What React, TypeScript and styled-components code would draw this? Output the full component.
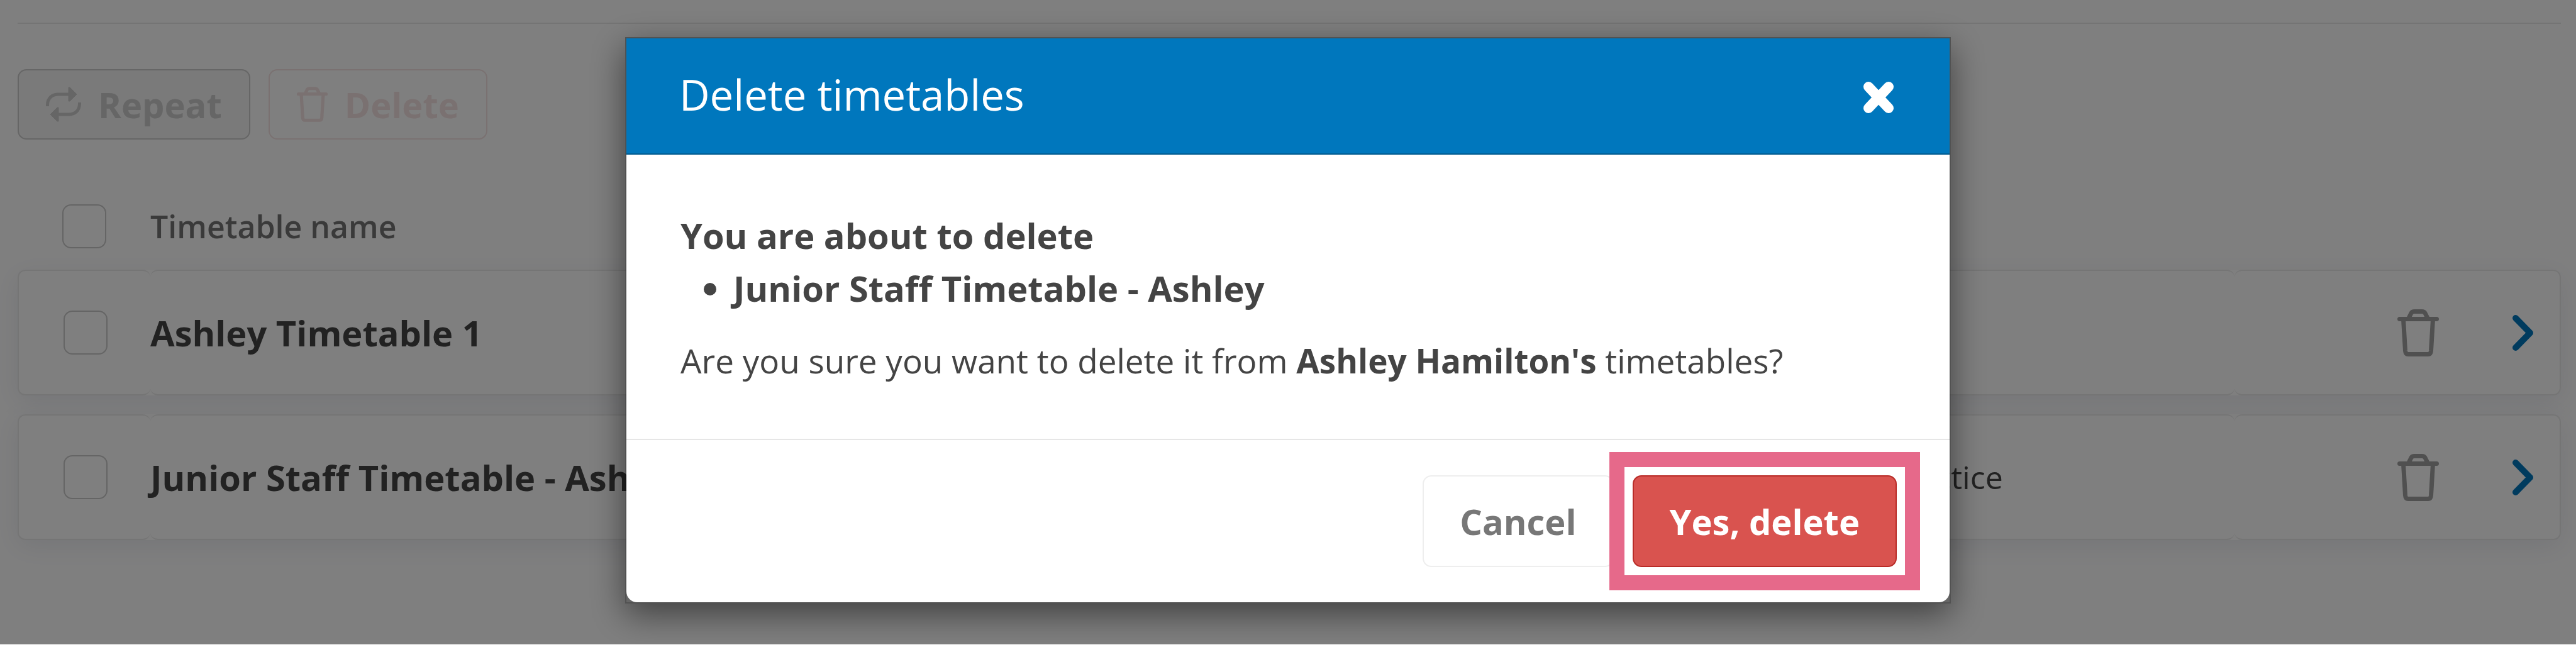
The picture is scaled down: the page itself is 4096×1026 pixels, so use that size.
import React from "react";
import styled, { createGlobalStyle, css } from "styled-components";

const GlobalStyle = createGlobalStyle`
  *, *::before, *::after { box-sizing: border-box; }
  html, body { margin: 0; padding: 0; }
  body {
    min-height: 100vh;
    background: #fff;
    color: #444;
    font-family: "Open Sans", "Noto Sans", sans-serif;
    font-size: 56px;
    line-height: 84px;
    overflow: hidden;
  }
  button { font: inherit; cursor: pointer; margin: 0; }
`;

const Page = styled.main`
  padding: 36px 24px 0 28px;
`;

const Divider = styled.hr`
  height: 2px;
  margin: 0;
  border: 0;
  background: #e8e8e8;
`;

const Toolbar = styled.div`
  display: flex;
  gap: 29px;
  margin-top: 72px;
`;

const ToolButton = styled.button<{ $danger?: boolean }>`
  display: flex;
  align-items: center;
  gap: 27px;
  height: 112px;
  padding: 0 43px;
  border: 2px solid #ccc;
  border-radius: 14px;
  background: #f4f4f4;
  color: #ccc;
  font-weight: 700;
  ${(p) =>
    p.$danger &&
    css`
      border-color: #f4e2e2;
      background: transparent;
      color: #f4e2e2;
    `}
`;

const Table = styled.table`
  width: 100%;
  margin-top: 69px;
  table-layout: fixed;
  border-collapse: separate;
  border-spacing: 0 30px;
`;

const CheckCol = styled.col`
  width: 211px;
`;
const SiteCol = styled.col`
  width: 575px;
`;
const ActionCol = styled.col`
  width: 519px;
`;

const HeadCell = styled.th`
  height: 78px;
  padding: 0;
  color: #747474;
  font-size: 50px;
  font-weight: 600;
  line-height: 78px;
  text-align: left;
  vertical-align: middle;
`;

const HeadCheckCell = styled(HeadCell)`
  padding-left: 71px;
`;

const Row = styled.tr`
  border-radius: 14px;
  box-shadow: 0 10px 40px rgba(70, 85, 130, 0.11);
`;

const Cell = styled.td<{ $strong?: boolean; $inset?: boolean }>`
  height: 200px;
  padding: 0 0 0 ${(p) => (p.$inset ? 22 : 0)}px;
  border: 0 solid #ebebeb;
  border-width: 2px 0;
  border-radius: 12px;
  background: #fff;
  font-size: ${(p) => (p.$strong ? 56 : 50)}px;
  font-weight: ${(p) => (p.$strong ? 700 : 400)};
  white-space: nowrap;
  vertical-align: middle;
  &:first-child { border-left-width: 2px; padding-left: 71px; }
  &:last-child { border-right-width: 2px; }
`;

const Checkbox = styled.input`
  display: block;
  width: 70px;
  height: 70px;
  margin: 0;
  appearance: none;
  border: 2px solid #cacaca;
  border-radius: 14px;
  background: #fff;
`;

const RowActions = styled.div`
  display: flex;
  align-items: center;
  justify-content: flex-end;
  gap: 117px;
  padding-right: 42px;
`;

const IconButton = styled.button<{ $color: string }>`
  display: flex;
  padding: 0;
  border: 0;
  background: none;
  color: ${(p) => p.$color};
`;

const CloseButton = styled(IconButton)`
  padding-top: 8px;
`;

const Backdrop = styled.div`
  position: fixed;
  inset: 0 0 1px;
  padding-top: 59px;
  background: rgba(0, 0, 0, 0.5);
  overflow: hidden;
`;

const Modal = styled.section`
  width: 100%;
  max-width: 2108px;
  margin: 0 auto;
  border: 2px solid rgba(0, 0, 0, 0.2);
  background: rgba(0, 0, 0, 0.2);
  box-shadow: 0 17px 51px rgba(0, 0, 0, 0.5);
`;

const ModalHeader = styled.header`
  display: flex;
  align-items: center;
  justify-content: space-between;
  padding: 42px 88px 46px 84px;
  border-bottom: 2px solid #005a8f;
  background: #0077bd;
  color: #fff;
`;

const ModalTitle = styled.h2`
  margin: 0;
  font-size: 67px;
  font-weight: 400;
  line-height: 95px;
`;

const ModalBody = styled.div`
  padding: 86px 86px 82px;
  background: #fff;
`;

const Lead = styled.p`
  margin: 0;
  font-weight: 700;
`;

const Question = styled.p`
  margin: 0;
  font-size: 53px;
`;

const DeleteList = styled.ul`
  margin: 0 0 32px;
  padding-left: 84px;
  font-weight: 700;
`;

const ModalFooter = styled.footer`
  display: flex;
  justify-content: flex-end;
  gap: 30px;
  padding: 56px 84px;
  border-top: 2px solid #e6e6e6;
  border-radius: 0 0 17px 17px;
  background: #fff;
`;

const ModalButton = styled.button<{ $danger?: boolean }>`
  height: 146px;
  padding: 0 57px;
  border: 2px solid ${(p) => (p.$danger ? "#b92c28" : "#eee")};
  border-radius: 14px;
  background: ${(p) => (p.$danger ? "#d9534f" : "#fff")};
  color: ${(p) => (p.$danger ? "#fff" : "#777")};
  font-weight: 700;
`;

const Highlight = styled.div`
  position: relative;
  display: flex;
  &::after {
    content: "";
    position: absolute;
    inset: -37px;
    border: 24px solid #e6698a;
    pointer-events: none;
  }
`;

function RepeatIcon() {
  return (
    <svg width="56" height="56" viewBox="0 0 56 56" fill="none" stroke="currentColor" strokeWidth="5" aria-hidden="true">
      <path d="M2.500 31V29C2.500 18 10 12 20 12H37" />
      <path d="M53.500 25V27C53.500 38 46 44 36 44H19" />
      <path d="M36 1H38L49 12L38 23H36Z" fill="currentColor" strokeWidth="1" strokeLinejoin="round" />
      <path d="M20 33H18L7 44L18 55H20Z" fill="currentColor" strokeWidth="1" strokeLinejoin="round" />
    </svg>
  );
}

function TrashIcon({ width, height }: { width: number; height: number }) {
  return (
    <svg
      width={width}
      height={height}
      viewBox="0 0 66 75"
      fill="none"
      stroke="currentColor"
      strokeWidth="7"
      strokeLinecap="round"
      strokeLinejoin="round"
      aria-hidden="true"
    >
      <path d="M3.500 15.500H62.500M9.500 16L12.500 66Q13 71.500 17 71.500H49Q53 71.500 53.500 66L56.500 16" />
      <path d="M18 14L22 6Q23.500 3.500 27 3.500H39Q42.500 3.500 44 6L48 14" />
    </svg>
  );
}

function ChevronIcon() {
  return (
    <svg width="33" height="57" viewBox="0 0 33 57" fill="none" stroke="currentColor" strokeWidth="10" strokeLinecap="round" strokeLinejoin="round" aria-hidden="true">
      <path d="M5 5L28 28.500L5 52" />
    </svg>
  );
}

function CloseIcon() {
  return (
    <svg width="50" height="52" viewBox="0 0 50 52" fill="none" stroke="currentColor" strokeWidth="16" strokeLinecap="round" aria-hidden="true">
      <path d="M9 9L41 43M41 9L9 43" />
    </svg>
  );
}

const timetables = [
  { name: "Ashley Timetable 1", site: "" },
  { name: "Junior Staff Timetable - Ashley", site: "Practice" },
];

export default function App() {
  return (
    <>
      <GlobalStyle />
      <Page>
        <Divider />
        <Toolbar>
          <ToolButton type="button">
            <RepeatIcon />
            Repeat
          </ToolButton>
          <ToolButton type="button" $danger>
            <TrashIcon width={49} height={56} />
            Delete
          </ToolButton>
        </Toolbar>
        <Table>
          <colgroup>
            <CheckCol />
            <col />
            <SiteCol />
            <ActionCol />
          </colgroup>
          <thead>
            <tr>
              <HeadCheckCell>
                <Checkbox type="checkbox" aria-label="Select all timetables" />
              </HeadCheckCell>
              <HeadCell>Timetable name</HeadCell>
              <HeadCell aria-label="Site" />
              <HeadCell aria-label="Actions" />
            </tr>
          </thead>
          <tbody>
            {timetables.map((t) => (
              <Row key={t.name}>
                <Cell>
                  <Checkbox type="checkbox" aria-label={`Select ${t.name}`} />
                </Cell>
                <Cell $strong>{t.name}</Cell>
                <Cell $inset>{t.site}</Cell>
                <Cell>
                  <RowActions>
                    <IconButton type="button" $color="#a0a0a0" aria-label={`Delete ${t.name}`}>
                      <TrashIcon width={66} height={75} />
                    </IconButton>
                    <IconButton type="button" $color="#0077bd" aria-label={`Open ${t.name}`}>
                      <ChevronIcon />
                    </IconButton>
                  </RowActions>
                </Cell>
              </Row>
            ))}
          </tbody>
        </Table>
      </Page>
      <Backdrop>
        <Modal role="dialog" aria-modal="true" aria-labelledby="modal-title">
          <ModalHeader>
            <ModalTitle id="modal-title">Delete timetables</ModalTitle>
            <CloseButton type="button" $color="#fff" aria-label="Close">
              <CloseIcon />
            </CloseButton>
          </ModalHeader>
          <ModalBody>
            <Lead>You are about to delete</Lead>
            <DeleteList>
              <li>Junior Staff Timetable - Ashley</li>
            </DeleteList>
            <Question>
              Are you sure you want to delete it from <strong>Ashley Hamilton's</strong> timetables?
            </Question>
          </ModalBody>
          <ModalFooter>
            <ModalButton type="button">Cancel</ModalButton>
            <Highlight>
              <ModalButton type="button" $danger>
                Yes, delete
              </ModalButton>
            </Highlight>
          </ModalFooter>
        </Modal>
      </Backdrop>
    </>
  );
}
